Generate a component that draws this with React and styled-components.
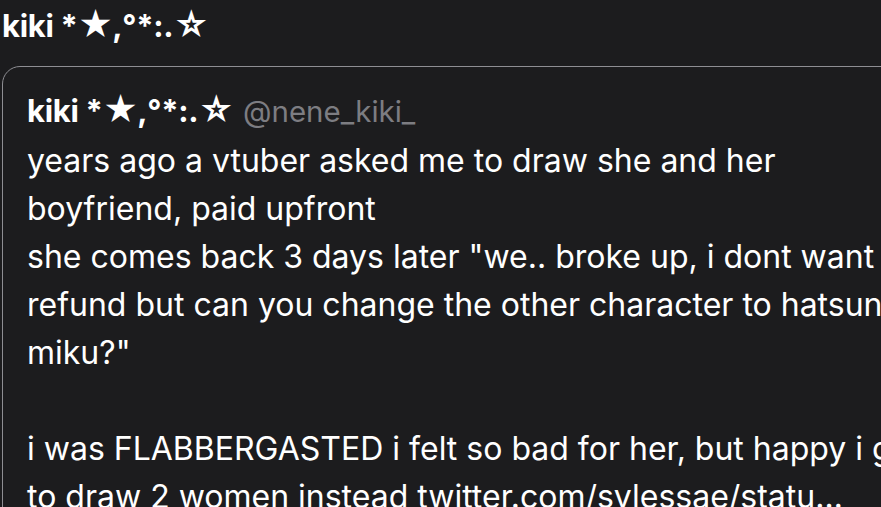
import React from "react";
import styled, { createGlobalStyle } from "styled-components";

const GlobalStyle = createGlobalStyle`
  html, body {
    margin: 0;
    padding: 0;
    background: #1c1c1e;
    overflow: hidden;
  }
  body {
    font-family: Inter, "Noto Sans", "DejaVu Sans", sans-serif;
    color: #ffffff;
  }
`;

const Page = styled.div`
  display: flex;
  flex-direction: column;
  gap: 15px;
  padding: 6px 0 0 2px;
  width: 1000px;
`;

const Name = styled.span`
  font-weight: 700;
  font-size: ${({ $size }) => $size}px;
  letter-spacing: -0.3px;
`;

const Star = styled.span`
  font-size: 1.1em;
  line-height: 0;
  letter-spacing: -1px;
`;

const Header = styled.div`
  line-height: 40px;
`;

const Card = styled.div`
  border: 1px solid #8e8e93;
  border-radius: 18px;
  padding: 20px 24px 40px;
  width: 960px;
  min-height: 600px;
`;

const TitleRow = styled.div`
  display: flex;
  align-items: baseline;
  gap: 10px;
  line-height: 48px;
`;

const Handle = styled.span`
  font-size: 29.5px;
  color: #7d7d82;
  font-weight: 400;
`;

const Body = styled.p`
  margin: 0;
  padding-top: 2px;
  font-size: 32px;
  line-height: 48px;
  white-space: pre;
`;

const text = `years ago a vtuber asked me to draw she and her
boyfriend, paid upfront
she comes back 3 days later "we.. broke up, i dont want a
refund but can you change the other character to hatsune
miku?"

i was FLABBERGASTED i felt so bad for her, but happy i got
to draw 2 women instead twitter.com/sylessae/statu…`;

function DisplayName({ size }) {
  return (
    <Name $size={size}>
      kiki *<Star>★</Star>,°*:.<Star>☆</Star>
    </Name>
  );
}

export default function App() {
  return (
    <>
      <GlobalStyle />
      <Page>
        <Header>
          <DisplayName size={31} />
        </Header>
        <Card>
          <TitleRow>
            <DisplayName size={31} />
            <Handle>@nene_kiki_</Handle>
          </TitleRow>
          <Body>{text}</Body>
        </Card>
      </Page>
    </>
  );
}
